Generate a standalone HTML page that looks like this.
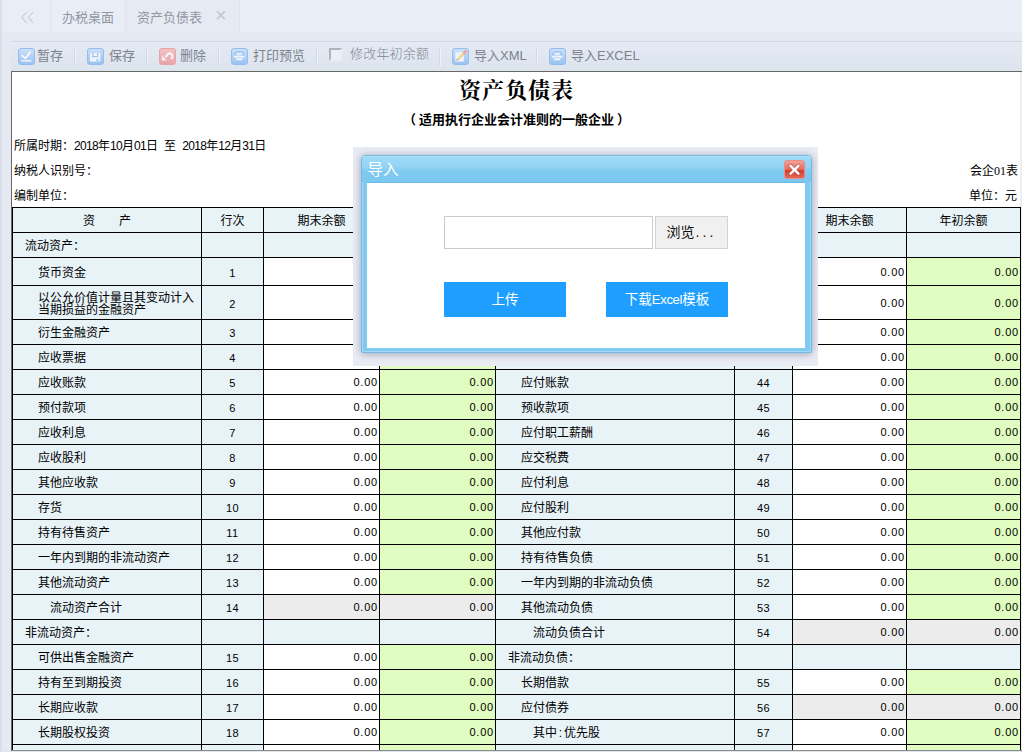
<!DOCTYPE html>
<html lang="zh-CN">
<head>
<meta charset="utf-8">
<title>资产负债表</title>
<style>
html,body{margin:0;padding:0;}
body{width:1022px;height:752px;overflow:hidden;position:relative;background:#e5e9f2;
  font-family:"Liberation Sans","Noto Sans CJK SC",sans-serif;font-size:12px;color:#000;}
.abs{position:absolute;}
#stripe{left:0;top:0;width:2px;height:752px;background:#d9deea;}
#tabbar{left:2px;top:0;right:0;height:32px;background:#e9edf6;}
#tabbar .sep{position:absolute;top:0;width:1px;height:32px;background:#dfe4ee;}
#tabbar .t{position:absolute;top:0;height:32px;line-height:36px;font-size:13px;color:#9397a3;white-space:nowrap;}
#tabbar .act{position:absolute;left:124px;top:0;width:113px;height:32px;background:#e6eaf3;}
#toolbar{left:11px;top:41px;right:0;height:29px;border-top:1px solid #cbd9e6;
  background:linear-gradient(#e5eaf4,#dce4ee);}
#toolbar .tx{position:absolute;top:0;height:29px;line-height:27px;font-size:13px;color:#7d828e;white-space:nowrap;}
#toolbar .sp{position:absolute;top:6px;width:1px;height:18px;background:#d3dae6;border-right:1px solid #eef1f8;}
#toolbar svg{position:absolute;top:6px;}
#content{left:11px;top:71px;width:1011px;height:678px;border-left:1px solid #686868;border-top:1px solid #686868;border-bottom:1px solid #8c8c8c;background:#fff;overflow:hidden;}
#botline{left:0;top:751px;width:1022px;height:1px;background:#dfe3ec;}
/* everything inside #content is positioned relative to page for simplicity */
#page{position:absolute;left:-12px;top:-72px;width:1022px;height:752px;}
.d{letter-spacing:-0.67px;}
.sp6{display:inline-block;width:6px;}
.c6{display:inline-block;width:7px;text-align:center;}
.info{position:absolute;font-size:12px;line-height:14px;white-space:nowrap;}
#title{left:0;width:1033px;top:75px;text-align:center;font-family:"Liberation Serif","Noto Serif CJK SC",serif;font-weight:bold;font-size:22px;line-height:32px;letter-spacing:1px;}
#subtitle{left:0;width:1033px;top:111px;text-align:center;font-weight:bold;font-size:13px;line-height:18px;}
table{position:absolute;left:12px;top:207px;width:1009px;border-collapse:separate;border-spacing:0;border-left:1px solid #000;border-top:1px solid #000;table-layout:fixed;}
td,th{box-sizing:border-box;border-right:1px solid #000;border-bottom:1px solid #000;padding:2px 3px 0 1px;font-size:12px;font-weight:normal;line-height:12px;overflow:hidden;white-space:nowrap;vertical-align:middle;}
th{background:#e8f3f8;text-align:center;height:25px;padding:2px 0 0 0;}
td.l{background:#e8f3f8;text-align:left;}
td.i0{padding-left:12px;}
td.i1{padding-left:25px;}
td.i2{padding-left:37px;}
td.i3{padding-left:49px;}
td.n{background:#e8f3f8;text-align:center;padding:2px 0 0 0;font-size:11px;letter-spacing:.5px;}
td.b{background:#e8f3f8;}
td.w{background:#fff;text-align:right;font-size:11px;letter-spacing:.8px;padding-right:1px;padding-top:0;}
td.g{background:#e0fcc0;text-align:right;font-size:11px;letter-spacing:.8px;padding-right:1px;padding-top:0;}
td.s{background:#ececec;text-align:right;font-size:11px;letter-spacing:.8px;padding-right:1px;padding-top:0;}
/* dialog */
#shadow{left:353px;top:147px;width:465px;height:219px;background:#eaecf4;overflow:hidden;}
#shadow i{position:absolute;left:8px;top:8px;width:451px;height:198px;border-radius:4px;box-shadow:0 1px 7px 1px rgba(78,84,120,.40);}
#dlg{left:361px;top:155px;width:451px;height:198px;box-sizing:border-box;background:#80caf1;border-radius:4px 4px 2px 2px;border:1px solid #72b9e2;box-shadow:inset 0 0 0 1px #a2dbf7;}
#dlgtitle{left:0;top:0;width:449px;height:26px;border-radius:3px 3px 0 0;background:linear-gradient(#9fdaf7 0%,#93d4f5 40%,#7fcaf1 60%,#7ac7ef 100%);box-shadow:inset 0 1px 0 #b2e2f9;}
#dlgtitle span{position:absolute;left:5.5px;top:0;line-height:27px;font-size:15.5px;color:#fff;}
#dlgbody{left:5px;top:26px;width:438px;height:166px;background:#fff;border-top:1px solid #6fb9e4;box-sizing:border-box;}
#close{left:422px;top:4px;width:21px;height:19px;}
#file{left:444px;top:216px;width:209px;height:33px;box-sizing:border-box;border:1px solid #cacaca;background:#fff;}
#browse{left:655px;top:216px;width:73px;height:33px;box-sizing:border-box;border:1px solid #d3d3d3;background:#f0f0f0;text-align:center;line-height:31px;font-size:14px;color:#111;}
#browse span{letter-spacing:3.1px;margin-left:1px;}
.btn{top:282px;width:122px;height:35px;background:#1e9fff;color:#fff;text-align:center;line-height:36px;font-size:13.5px;}
</style>
</head>
<body>
<div id="stripe" class="abs"></div>
<div id="tabbar" class="abs">
  <div class="act"></div>
  <div class="sep" style="left:48px"></div>
  <div class="sep" style="left:123px"></div>
  <div class="sep" style="left:237px"></div>
  <svg style="position:absolute;left:16px;top:10px" width="18" height="15" viewBox="0 0 18 15"><path d="M8.9 1.8 L3.8 7.5 L8.9 13.2 M15.4 1.8 L10.3 7.5 L15.4 13.2" fill="none" stroke="#bbc0ce" stroke-width="1"/></svg>
  <div class="t" style="left:60px">办税桌面</div>
  <div class="t" style="left:135px">资产负债表</div>
  <div class="t" style="left:213px;font-size:20px;color:#c3c7d3;line-height:31px">×</div>
</div>
<div id="toolbar" class="abs">
  <!--TB0-->
  <svg width="0" height="0" style="position:absolute"><defs>
    <linearGradient id="gb" x1="0" y1="0" x2="0" y2="1"><stop offset="0" stop-color="#cde0f8"/><stop offset="1" stop-color="#98c2f2"/></linearGradient>
    <linearGradient id="gr" x1="0" y1="0" x2="0" y2="1"><stop offset="0" stop-color="#f2c4c2"/><stop offset="1" stop-color="#eaa3a8"/></linearGradient>
  </defs></svg>
  <svg style="left:7px" width="17" height="17" viewBox="0 0 17 17"><rect x=".5" y=".5" width="16" height="16" rx="2.5" fill="url(#gb)" stroke="#94bdee"/><path d="M4.2 7.6 L7.4 10.4 L12 4.4" fill="none" stroke="#f4f8fe" stroke-width="1.9" stroke-linecap="round" stroke-linejoin="round"/><rect x="3.4" y="12.1" width="10" height="1.5" fill="#f0f5fd"/></svg>
  <div class="tx" style="left:26px">暂存</div>
  <div class="sp" style="left:63px"></div>
  <svg style="left:76px" width="17" height="17" viewBox="0 0 17 17"><rect x=".5" y=".5" width="16" height="16" rx="2.5" fill="url(#gb)" stroke="#94bdee"/><path d="M3 5 H13.2 V13.6 H3 Z" fill="#eef3fc"/><path d="M5.8 5 V8.6 H10.6 V5" fill="none" stroke="#9cc3f1" stroke-width="1.2"/><rect x="9.4" y="11.2" width="2.2" height="2.4" fill="#a4c8f2"/></svg>
  <div class="tx" style="left:98px">保存</div>
  <div class="sp" style="left:135px"></div>
  <svg style="left:148px" width="17" height="17" viewBox="0 0 17 17"><rect x=".5" y=".5" width="16" height="16" rx="2.5" fill="url(#gr)" stroke="#e9a3a8"/><path d="M2.9 7.4 V12.4 H7.9 Z" fill="#f7f2f6"/><path d="M6.6 9.3 C7.8 6.6 9.6 5.2 11.4 5.5 C13.6 6 14 8.6 12.5 11.2" fill="none" stroke="#f5f1f6" stroke-width="2.3" stroke-linecap="butt"/></svg>
  <div class="tx" style="left:169px">删除</div>
  <div class="sp" style="left:207px"></div>
  <svg style="left:220px" width="17" height="17" viewBox="0 0 17 17"><rect x=".5" y=".5" width="16" height="16" rx="2.5" fill="url(#gb)" stroke="#94bdee"/><rect x="4.2" y="3.9" width="8" height="3.6" rx="1" fill="none" stroke="#8fb9ee" stroke-width=".9"/><rect x="5.3" y="4.9" width="5.8" height="1.5" rx=".4" fill="#f0f5fd"/><path d="M2.9 8 Q8.2 6.7 13.3 8 V9.8 Q8.2 8.6 2.9 9.8 Z" fill="#f0f5fd"/><rect x="5.1" y="10.3" width="6.2" height="2" rx=".4" fill="#f0f5fd"/></svg>
  <div class="tx" style="left:242px">打印预览</div>
  <div class="sp" style="left:305px"></div>
  <div style="position:absolute;left:318px;top:6px;width:13px;height:13px;box-sizing:border-box;border:2px solid;border-color:#aeb3be #e9edf5 #e9edf5 #aeb3be;background:#eceff6"></div>
  <div class="tx" style="left:339px;top:-2px;font-weight:300;color:#80858f;letter-spacing:.2px">修改年初余额</div>
  <div class="sp" style="left:428px"></div>
  <svg style="left:441px" width="17" height="17" viewBox="0 0 17 17"><rect x=".5" y=".5" width="16" height="16" rx="2.5" fill="url(#gb)" stroke="#94bdee"/><rect x="3.3" y="4.2" width="8.6" height="9.4" fill="#edf2fb"/><path d="M5.4 11.8 L13 4.2" stroke="#efd890" stroke-width="2.6"/><path d="M12.2 5 L13.6 3.6" stroke="#f0a3a3" stroke-width="2.8" stroke-linecap="round"/><path d="M4.4 12.6 L6.4 12.2 L4.9 10.6 Z" fill="#8aa6d0"/></svg>
  <div class="tx" style="left:463px">导入XML</div>
  <div class="sp" style="left:525px"></div>
  <svg style="left:538px" width="17" height="17" viewBox="0 0 17 17"><rect x=".5" y=".5" width="16" height="16" rx="2.5" fill="url(#gb)" stroke="#94bdee"/><rect x="4.2" y="3.9" width="8" height="3.6" rx="1" fill="none" stroke="#8fb9ee" stroke-width=".9"/><rect x="5.3" y="4.9" width="5.8" height="1.5" rx=".4" fill="#f0f5fd"/><path d="M2.9 8 Q8.2 6.7 13.3 8 V9.8 Q8.2 8.6 2.9 9.8 Z" fill="#f0f5fd"/><rect x="5.1" y="10.3" width="6.2" height="2" rx=".4" fill="#f0f5fd"/></svg>
  <div class="tx" style="left:560px">导入EXCEL</div>
<!--TB1-->
</div>
<div id="content" class="abs"><div id="page">
  <div class="abs" style="left:1020px;top:72px;width:2px;height:678px;background:#efefef"></div>
  <div id="title" class="abs">资产负债表</div>
  <div id="subtitle" class="abs"><span style="margin:0 3px 0 -3px">（</span>适用执行企业会计准则的一般企业<span style="margin:0 -3px 0 3px">）</span></div>
  <div class="info" style="left:14px;top:139px">所属时期：<span class="d">2018</span>年<span class="d">10</span>月<span class="d">01</span>日<span class="sp6"></span>至<span class="sp6"></span><span class="d">2018</span>年<span class="d">12</span>月<span class="d">31</span>日</div>
  <div class="info" style="left:14px;top:164px">纳税人识别号：</div>
  <div class="info" style="left:14px;top:189px">编制单位：</div>
  <div class="info" style="right:4px;top:164px">会企<span style="font-family:'Liberation Serif',serif">01</span>表</div>
  <div class="info" style="right:5px;top:189px">单位：元</div>
  <table>
    <colgroup><col style="width:189px"><col style="width:62px"><col style="width:116px"><col style="width:116px"><col style="width:239px"><col style="width:58px"><col style="width:114px"><col style="width:114px"></colgroup>
    <tr style="height:25px"><th>资<span style="display:inline-block;width:24px"></span>产</th><th>行次</th><th>期末余额</th><th>年初余额</th><th>负债和所有者权益</th><th>行次</th><th>期末余额</th><th>年初余额</th></tr>
<tr style="height:25px"><td class="l i0">流动资产：</td><td class="n"></td><td class="b"></td><td class="b"></td><td class="l i0">流动负债：</td><td class="n"></td><td class="b"></td><td class="b"></td></tr>
<tr style="height:28px"><td class="l i1">货币资金</td><td class="n">1</td><td class="w">0.00</td><td class="g">0.00</td><td class="l i1">短期借款</td><td class="n">40</td><td class="w">0.00</td><td class="g">0.00</td></tr>
<tr style="height:34px"><td class="l i1">以公允价值计量且其变动计入<br>当期损益的金融资产</td><td class="n">2</td><td class="w">0.00</td><td class="g">0.00</td><td class="l i1">以公允价值计量且其变动计入<br>当期损益的金融负债</td><td class="n">41</td><td class="w">0.00</td><td class="g">0.00</td></tr>
<tr style="height:25px"><td class="l i1">衍生金融资产</td><td class="n">3</td><td class="w">0.00</td><td class="g">0.00</td><td class="l i1">衍生金融负债</td><td class="n">42</td><td class="w">0.00</td><td class="g">0.00</td></tr>
<tr style="height:25px"><td class="l i1">应收票据</td><td class="n">4</td><td class="w">0.00</td><td class="g">0.00</td><td class="l i1">应付票据</td><td class="n">43</td><td class="w">0.00</td><td class="g">0.00</td></tr>
<tr style="height:25px"><td class="l i1">应收账款</td><td class="n">5</td><td class="w">0.00</td><td class="g">0.00</td><td class="l i1">应付账款</td><td class="n">44</td><td class="w">0.00</td><td class="g">0.00</td></tr>
<tr style="height:25px"><td class="l i1">预付款项</td><td class="n">6</td><td class="w">0.00</td><td class="g">0.00</td><td class="l i1">预收款项</td><td class="n">45</td><td class="w">0.00</td><td class="g">0.00</td></tr>
<tr style="height:25px"><td class="l i1">应收利息</td><td class="n">7</td><td class="w">0.00</td><td class="g">0.00</td><td class="l i1">应付职工薪酬</td><td class="n">46</td><td class="w">0.00</td><td class="g">0.00</td></tr>
<tr style="height:25px"><td class="l i1">应收股利</td><td class="n">8</td><td class="w">0.00</td><td class="g">0.00</td><td class="l i1">应交税费</td><td class="n">47</td><td class="w">0.00</td><td class="g">0.00</td></tr>
<tr style="height:25px"><td class="l i1">其他应收款</td><td class="n">9</td><td class="w">0.00</td><td class="g">0.00</td><td class="l i1">应付利息</td><td class="n">48</td><td class="w">0.00</td><td class="g">0.00</td></tr>
<tr style="height:25px"><td class="l i1">存货</td><td class="n">10</td><td class="w">0.00</td><td class="g">0.00</td><td class="l i1">应付股利</td><td class="n">49</td><td class="w">0.00</td><td class="g">0.00</td></tr>
<tr style="height:25px"><td class="l i1">持有待售资产</td><td class="n">11</td><td class="w">0.00</td><td class="g">0.00</td><td class="l i1">其他应付款</td><td class="n">50</td><td class="w">0.00</td><td class="g">0.00</td></tr>
<tr style="height:25px"><td class="l i1">一年内到期的非流动资产</td><td class="n">12</td><td class="w">0.00</td><td class="g">0.00</td><td class="l i1">持有待售负债</td><td class="n">51</td><td class="w">0.00</td><td class="g">0.00</td></tr>
<tr style="height:25px"><td class="l i1">其他流动资产</td><td class="n">13</td><td class="w">0.00</td><td class="g">0.00</td><td class="l i1">一年内到期的非流动负债</td><td class="n">52</td><td class="w">0.00</td><td class="g">0.00</td></tr>
<tr style="height:25px"><td class="l i2">流动资产合计</td><td class="n">14</td><td class="s">0.00</td><td class="s">0.00</td><td class="l i1">其他流动负债</td><td class="n">53</td><td class="w">0.00</td><td class="g">0.00</td></tr>
<tr style="height:25px"><td class="l i0">非流动资产：</td><td class="n"></td><td class="b"></td><td class="b"></td><td class="l i2">流动负债合计</td><td class="n">54</td><td class="s">0.00</td><td class="s">0.00</td></tr>
<tr style="height:25px"><td class="l i1">可供出售金融资产</td><td class="n">15</td><td class="w">0.00</td><td class="g">0.00</td><td class="l i0">非流动负债：</td><td class="n"></td><td class="b"></td><td class="b"></td></tr>
<tr style="height:25px"><td class="l i1">持有至到期投资</td><td class="n">16</td><td class="w">0.00</td><td class="g">0.00</td><td class="l i1">长期借款</td><td class="n">55</td><td class="w">0.00</td><td class="g">0.00</td></tr>
<tr style="height:25px"><td class="l i1">长期应收款</td><td class="n">17</td><td class="w">0.00</td><td class="g">0.00</td><td class="l i1">应付债券</td><td class="n">56</td><td class="s">0.00</td><td class="s">0.00</td></tr>
<tr style="height:25px"><td class="l i1">长期股权投资</td><td class="n">18</td><td class="w">0.00</td><td class="g">0.00</td><td class="l i2">其中<span class="c6">:</span>优先股</td><td class="n">57</td><td class="w">0.00</td><td class="g">0.00</td></tr>
<tr style="height:25px"><td class="l i1">投资性房地产</td><td class="n">19</td><td class="w">0.00</td><td class="g">0.00</td><td class="l i3">永续债</td><td class="n">58</td><td class="w">0.00</td><td class="g">0.00</td></tr>
  </table>
  <div id="shadow" class="abs"><i></i></div>
  <div id="dlg" class="abs">
    <div id="dlgtitle" class="abs"><span>导入</span></div>
    <div id="dlgbody" class="abs"></div>
    <svg id="close" class="abs" viewBox="0 0 21 19"><defs><linearGradient id="gc" x1="0" y1="0" x2="0" y2="1"><stop offset="0" stop-color="#f0a79e"/><stop offset=".5" stop-color="#e4695c"/><stop offset=".52" stop-color="#d33a27"/><stop offset="1" stop-color="#e4695e"/></linearGradient></defs><rect x=".5" y=".5" width="20" height="18" rx="2.5" fill="url(#gc)" stroke="#e98d84"/><path d="M6.6 5.8 L14.4 13.6 M14.4 5.8 L6.6 13.6" stroke="#a8372c" stroke-width="3.8" stroke-linecap="round" opacity=".55"/><path d="M6.6 5.8 L14.4 13.6 M14.4 5.8 L6.6 13.6" stroke="#fff" stroke-width="2.5" stroke-linecap="round"/></svg>
  </div>
  <div id="file" class="abs"></div>
  <div id="browse" class="abs">浏览<span>...</span></div>
  <div class="btn abs" style="left:444px">上传</div>
  <div class="btn abs" style="left:606px">下载<span style="font-size:13px;letter-spacing:-.3px">Excel</span>模板</div>
</div></div>
<div id="botline" class="abs"></div>
</body>
</html>
